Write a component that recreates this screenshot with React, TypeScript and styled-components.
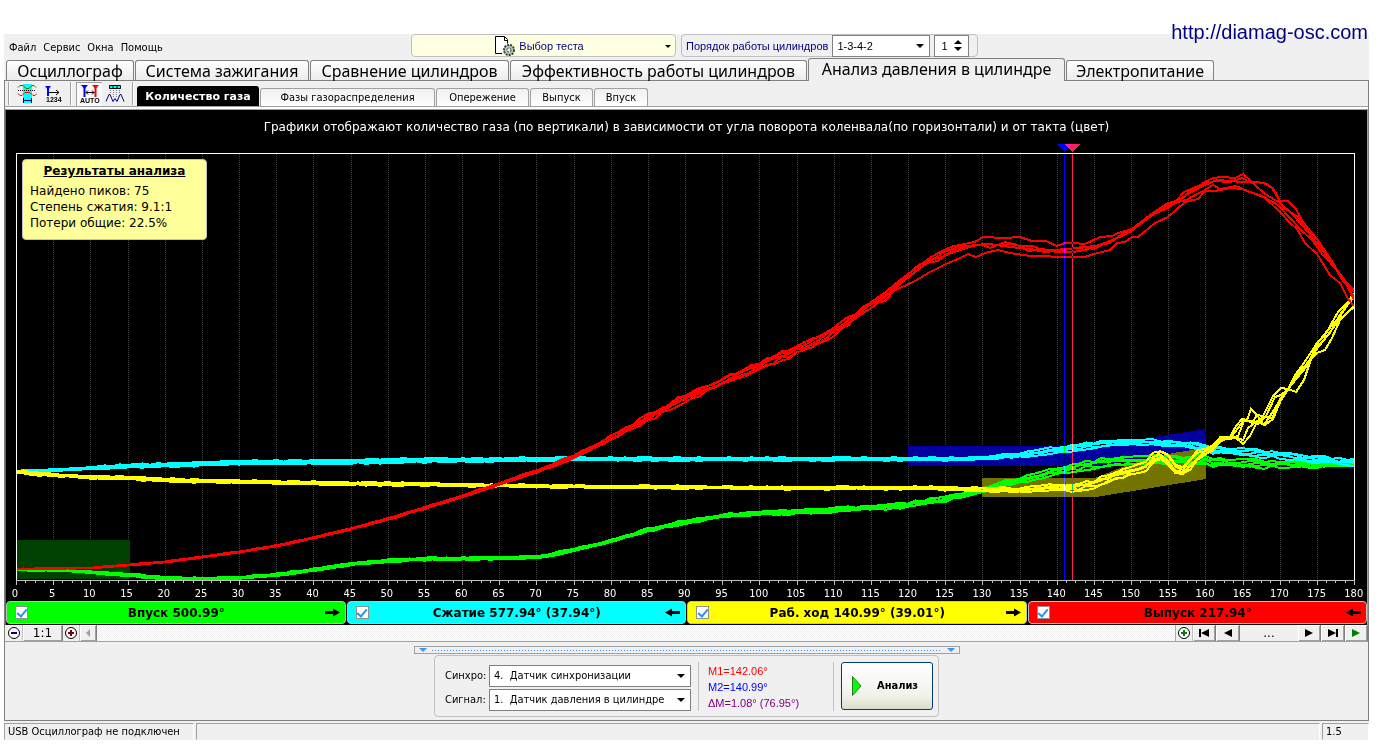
import React from "react";
import styled, { createGlobalStyle, css } from "styled-components";

const ui = `"DejaVu Sans Condensed", "Liberation Sans", sans-serif`;
const wide = `"DejaVu Sans", sans-serif`;
const plain = `"Liberation Sans", sans-serif`;
const heading = `"Noto Sans", sans-serif`;

const Global = createGlobalStyle`
  * { box-sizing: border-box; }
  body { margin: 0; background: #fff; color: #000; font: 11px/16px ${ui}; }
  button, select, input { font: inherit; color: inherit; margin: 0; padding: 0; border-radius: 0; }
  svg { display: block; flex: none; }
`;

/* ---------- chart data ---------- */

type Point = [number, number];

const X0 = 16;
const X1 = 1354;
const Y0 = 153;
const Y1 = 580;
const DEG = (X1 - X0) / 180;

type Series = { color: string; body: Point[]; spread: Point[]; tails?: Point[][]; tailFrom?: number };

const series: Series[] = [
  {
    color: "#00ff00",
    body: [[16, 570], [55, 570], [90, 572], [128, 575], [165, 578], [202, 579], [239, 578], [276, 575], [313, 570], [350, 564], [388, 561], [425, 559], [500, 558], [522, 558], [545, 556], [574, 550], [611, 541], [648, 530], [685, 522], [722, 516], [759, 513], [797, 512], [834, 510], [871, 508], [908, 505], [945, 499], [982, 490], [1007, 483], [1037, 476], [1057, 471], [1072, 468], [1094, 464], [1125, 461], [1147, 460], [1168, 460], [1205, 461], [1227, 463], [1260, 464], [1317, 465], [1354, 464]],
    spread: [[16, 0.6], [110, 1.5], [400, 1.5], [700, 2], [900, 3], [1050, 3.5], [1100, 5], [1210, 5], [1280, 4], [1354, 2]],
  },
  {
    color: "#00ffff",
    body: [[16, 472], [55, 470], [90, 468], [128, 466], [165, 465], [202, 464], [240, 463], [313, 462], [388, 461], [460, 460], [574, 459], [685, 459], [908, 459], [945, 459], [982, 458], [1007, 456], [1027, 454], [1042, 452], [1064, 449], [1093, 445], [1113, 443], [1147, 442], [1168, 444], [1190, 445], [1205, 449], [1227, 451], [1250, 453], [1280, 455], [1300, 458], [1327, 460], [1354, 462]],
    spread: [[16, 1.5], [240, 2.5], [600, 2.2], [700, 1.8], [980, 1.8], [1060, 3.5], [1160, 3], [1240, 4], [1354, 4]],
  },
  {
    color: "#ffff00",
    body: [[16, 472], [55, 475], [90, 477], [128, 478], [165, 480], [202, 481], [240, 482], [313, 483], [388, 484], [460, 485], [537, 486], [611, 487], [685, 487], [760, 488], [908, 488], [982, 489], [1015, 490], [1057, 487], [1073, 488], [1094, 484], [1113, 477], [1147, 466], [1153, 459], [1162, 454], [1168, 460], [1176, 471], [1184, 471], [1192, 462], [1199, 455], [1205, 453], [1213, 447], [1220, 440]],
    spread: [[16, 2], [500, 1.6], [900, 1.6], [1050, 3], [1110, 5], [1160, 6], [1190, 7], [1205, 4], [1220, 2]],
    tailFrom: 1216,
    tails: [
      [[1220, 438], [1230, 437], [1236, 426], [1242, 419], [1247, 420], [1251, 409], [1257, 415], [1263, 416], [1273, 396], [1281, 388], [1288, 389], [1295, 375], [1304, 363], [1317, 343], [1325, 335], [1338, 312], [1347, 303], [1354, 293]],
      [[1220, 440], [1236, 438], [1243, 444], [1250, 436], [1257, 422], [1265, 425], [1273, 419], [1281, 400], [1288, 389], [1296, 392], [1304, 380], [1311, 359], [1317, 353], [1325, 350], [1332, 338], [1340, 320], [1354, 306]],
      [[1220, 439], [1232, 438], [1238, 436], [1244, 421], [1251, 421], [1258, 424], [1266, 416], [1275, 397], [1281, 395], [1288, 389], [1297, 378], [1307, 366], [1318, 346], [1330, 333], [1341, 313], [1354, 297]],
      [[1220, 442], [1232, 436], [1243, 440], [1248, 428], [1256, 422], [1264, 417], [1272, 418], [1280, 402], [1289, 388], [1298, 374], [1309, 361], [1319, 341], [1328, 330], [1340, 316], [1354, 295]],
      [[1220, 437], [1230, 438], [1239, 427], [1244, 419], [1252, 423], [1257, 415], [1264, 425], [1274, 410], [1282, 396], [1288, 390], [1296, 377], [1304, 370], [1316, 350], [1327, 336], [1340, 319], [1354, 307]],
    ],
  },
  {
    color: "#ff0000",
    body: [[16, 569], [90, 568], [128, 565], [165, 562], [202, 557], [240, 552], [276, 546], [313, 538], [350, 529], [388, 519], [425, 508], [460, 497], [499, 484], [537, 471], [574, 457], [611, 438], [648, 418], [685, 398], [722, 382], [759, 366], [797, 350], [834, 332], [872, 305], [892, 291]],
    spread: [[16, 0.4], [400, 1], [560, 2], [640, 4], [800, 5], [892, 5]],
    tailFrom: 892,
    tails: [
      [[900, 280], [923, 263], [931, 257], [946, 249], [954, 246], [975, 242], [983, 237], [1005, 238], [1020, 237], [1032, 241], [1046, 241], [1057, 246], [1065, 243], [1073, 243], [1085, 244], [1100, 237], [1112, 236], [1118, 233], [1132, 229], [1150, 215], [1168, 203], [1176, 201], [1184, 192], [1198, 186], [1213, 178], [1222, 177], [1235, 178], [1243, 174], [1252, 182], [1265, 183], [1273, 188], [1280, 201], [1288, 201], [1296, 209], [1303, 222], [1317, 239], [1330, 258], [1340, 276], [1354, 290]],
      [[900, 288], [915, 281], [930, 272], [946, 264], [960, 258], [968, 254], [976, 257], [985, 253], [998, 250], [1010, 253], [1030, 256], [1045, 256], [1057, 257], [1085, 257], [1094, 254], [1110, 250], [1117, 243], [1125, 242], [1132, 237], [1138, 237], [1155, 223], [1168, 217], [1185, 202], [1198, 199], [1205, 191], [1215, 191], [1230, 188], [1242, 189], [1255, 194], [1265, 198], [1280, 212], [1290, 223], [1297, 229], [1305, 243], [1317, 254], [1330, 275], [1340, 283], [1348, 299], [1354, 306]],
      [[900, 283], [923, 266], [932, 260], [946, 251], [962, 246], [983, 245], [990, 248], [1005, 242], [1020, 246], [1033, 246], [1045, 251], [1065, 249], [1080, 248], [1094, 246], [1110, 243], [1122, 234], [1132, 230], [1154, 214], [1168, 208], [1186, 195], [1205, 185], [1214, 181], [1230, 182], [1242, 178], [1254, 184], [1265, 194], [1280, 203], [1290, 212], [1302, 225], [1317, 243], [1332, 261], [1343, 281], [1354, 292]],
      [[900, 281], [920, 264], [938, 261], [946, 255], [960, 250], [975, 245], [990, 244], [1010, 247], [1030, 249], [1045, 252], [1064, 250], [1082, 247], [1094, 249], [1112, 240], [1122, 235], [1132, 229], [1144, 221], [1158, 211], [1170, 204], [1186, 200], [1203, 191], [1213, 185], [1220, 189], [1236, 186], [1250, 192], [1262, 196], [1278, 205], [1290, 218], [1300, 229], [1312, 240], [1323, 255], [1337, 270], [1354, 297]],
      [[900, 284], [914, 273], [930, 260], [942, 257], [958, 248], [972, 246], [984, 244], [1000, 245], [1015, 244], [1028, 251], [1042, 249], [1057, 252], [1073, 252], [1085, 250], [1102, 244], [1115, 239], [1130, 232], [1148, 218], [1164, 207], [1178, 202], [1194, 188], [1205, 184], [1218, 180], [1242, 182], [1258, 182], [1266, 184], [1272, 188], [1284, 208], [1298, 217], [1310, 234], [1320, 247], [1334, 266], [1344, 279], [1354, 300]],
    ],
  },
];

const interpolate = (points: Point[], x: number) => {
  for (let i = 1; i < points.length; i++) {
    const [ax, ay] = points[i - 1];
    const [bx, by] = points[i];
    if (x <= bx) return ay + ((by - ay) * (x - ax)) / (bx - ax);
  }
  return points[points.length - 1][1];
};

const noise = (n: number) => {
  const v = Math.sin(n * 127.1 + 311.7) * 43758.5453;
  return (v - Math.floor(v)) * 2 - 1;
};

const tracePoints = (s: Series, trace: number) => {
  const out: Point[] = [];
  const end = s.tailFrom ?? X1;
  for (let d = 0; d <= 180; d++) {
    const x = X0 + d * DEG;
    if (x > end + 1) break;
    const wander = (trace - 2) * 0.35 + noise(trace * 57 + d) * 0.4;
    out.push([x, Math.min(interpolate(s.body, x) + wander * interpolate(s.spread, x), Y1 - 1)]);
  }
  if (s.tails) out.push(...s.tails[trace]);
  return out.map(([x, y]) => `${x.toFixed(1)},${y.toFixed(1)}`).join(" ");
};

const marks = Array.from({ length: 37 }, (_, i) => i * 5);
const minorMarks = Array.from({ length: 145 }, (_, i) => i);

/* ---------- window frame ---------- */

const Page = styled.div`
  position: relative;
  display: flex;
  min-height: 100vh;
  padding: 34px 13px 4px 4px;
`;

const Site = styled.a`
  position: absolute;
  top: 20px;
  right: 14px;
  font: 20px/24px ${plain};
  color: #000080;
  text-decoration: none;
`;

const Window = styled.div`
  flex: 1;
  min-width: 0;
  display: flex;
  flex-direction: column;
  background: #f0f0f0;
`;

const Header = styled.header`
  display: flex;
  height: 24px;
`;

const Menu = styled.nav`
  display: flex;
  align-items: center;
  gap: 7px;
  width: 407px;
  padding: 3px 0 0 5px;
`;

const MenuItem = styled.button`
  border: 0;
  background: none;
`;

const TestPicker = styled.button`
  position: relative;
  display: flex;
  align-items: center;
  justify-content: center;
  gap: 4px;
  width: 265px;
  height: 23px;
  padding-right: 8px;
  border: 1px solid #c0c0c0;
  border-radius: 4px;
  background: #ffffe1;
  color: #000080;
  font: 11px/16px ${plain};
`;

const PickerArrow = styled.svg`
  position: absolute;
  right: 4px;
  top: 10px;
`;

const OrderGroup = styled.div`
  display: flex;
  align-items: center;
  gap: 4px;
  width: 297px;
  height: 23px;
  margin-left: 5px;
  padding-left: 4px;
  border: 1px solid #c0c0c0;
  border-radius: 4px;
  color: #000080;
  font: 11px/16px ${plain};
`;

const SelectBox = styled.span<{ $grow?: boolean }>`
  position: relative;
  display: flex;
  width: ${(p) => (p.$grow ? "202px" : "98px")};
  height: 22px;
  svg { position: absolute; right: 6px; top: 9px; pointer-events: none; }
`;

const Select = styled.select`
  flex: 1;
  appearance: none;
  padding: 0 16px 0 4px;
  border: 1px solid #808080;
  background: #fff;
  color: #000;
  outline: 0;
`;

const Spinner = styled.span`
  display: flex;
  width: 35px;
  height: 22px;
  border: 1px solid #808080;
  background: #fff;
`;

const SpinInput = styled.input`
  width: 14px;
  min-width: 0;
  flex: 1;
  padding-left: 6px;
  border: 0;
  outline: 0;
  background: none;
  color: #000;
`;

const SpinButtons = styled.span`
  display: flex;
  flex-direction: column;
  justify-content: center;
  gap: 3px;
  width: 14px;
`;

const SpinButton = styled.button`
  border: 0;
  background: none;
`;

/* ---------- tabs ---------- */

const MainTabs = styled.div`
  display: flex;
  align-items: flex-end;
  gap: 1px;
  height: 23px;
  padding-left: 2px;
  border-bottom: 1px solid #808080;
`;

const MainTab = styled.button<{ $active?: boolean; $width: number }>`
  width: ${(p) => p.$width}px;
  height: 20px;
  border: 1px solid #808080;
  border-bottom: 0;
  border-radius: 3px 3px 0 0;
  background: linear-gradient(#fff, #ececec);
  font: 16px/18px ${heading};
  white-space: nowrap;
  ${(p) => p.$active && css`
    height: 23px;
    margin-bottom: -1px;
    padding-bottom: 2px;
    background: #f0f0f0;
  `}
`;

const Work = styled.div`
  flex: 1;
  display: flex;
  flex-direction: column;
  border: solid #808080;
  border-width: 0 1px 1px 1px;
`;

const ToolRow = styled.div`
  display: flex;
  align-items: flex-end;
  height: 26px;
  padding-left: 3px;
  border-bottom: 1px solid #a0a0a0;
`;

const Tools = styled.div`
  display: flex;
  align-items: center;
  height: 25px;
`;

const Divider = styled.span`
  width: 2px;
  height: 23px;
  border-left: 1px solid #a0a0a0;
  border-right: 1px solid #fff;
`;

const ToolButton = styled.button<{ $pressed?: boolean }>`
  display: flex;
  align-items: center;
  justify-content: center;
  width: 26px;
  height: 24px;
  border: 0;
  background: ${(p) => (p.$pressed ? "#fafafa" : "none")};
  ${(p) => p.$pressed && css`border-left: 1px solid #a0a0a0; border-top: 1px solid #a0a0a0;`}
`;

const ToolGap = styled.span`
  width: 4px;
`;

const SubTabs = styled.div`
  display: flex;
  align-items: flex-end;
  gap: 1px;
  margin-left: 3px;
`;

const SubTab = styled.button<{ $active?: boolean; $width: number }>`
  width: ${(p) => p.$width}px;
  height: 18px;
  border: 1px solid #a0a0a0;
  border-bottom: 0;
  border-radius: 3px 3px 0 0;
  background: linear-gradient(#f0f0f0, #fff);
  font: 11px/16px ${ui};
  white-space: nowrap;
  ${(p) => p.$active && css`
    height: 20px;
    border-color: #000;
    background: #000;
    color: #fff;
    font: bold 11px/16px ${wide};
  `}
`;

/* ---------- chart ---------- */

const ChartFrame = styled.div`
  flex: 1;
  display: flex;
  padding-top: 2px;
  background: #fff;
`;

const ChartPanel = styled.section`
  flex: 1;
  min-width: 0;
  display: flex;
  flex-direction: column;
  border-top: 1px solid #a0a0a0;
  border-left: 1px solid #606060;
  border-right: 1px solid #a0a0a0;
  background: #000;
  color: #fff;
`;

const ChartTitle = styled.h1`
  margin: 9px 0 18px;
  font: 12px/16px ${wide};
  text-align: center;
`;

const Plot = styled.div`
  position: relative;
  flex: 1;
  display: flex;
  min-height: 300px;
  margin: 0 12px 0 10px;
`;

const PlotDrawing = styled.svg`
  flex: 1;
  width: 100%;
  height: auto;
  overflow: visible;
`;

const Results = styled.aside`
  position: absolute;
  left: 6px;
  top: 6px;
  width: 185px;
  height: 81px;
  padding: 3px 7px;
  border: 1px solid #c0c0c0;
  border-radius: 4px;
  background: #ffff99;
  color: #000;
  font: 12px/16px ${wide};
`;

const ResultsTitle = styled.h2`
  margin: 0 0 4px;
  font: bold 12px/16px ${wide};
  text-align: center;
  text-decoration: underline;
`;

const ResultLine = styled.p`
  margin: 0;
`;

const Ticks = styled.svg`
  width: calc(100% - 22px);
  height: 4px;
  margin-left: 10px;
`;

const Scale = styled.div`
  display: flex;
  justify-content: space-between;
  height: 16px;
  margin: 0 13px 0 9px;
  font: 11px/17px ${ui};
`;

const ScaleMark = styled.span`
  display: flex;
  justify-content: center;
  width: 0;
`;

const Phases = styled.div`
  display: flex;
  gap: 1px;
  padding-bottom: 1px;
`;

const Phase = styled.label<{ $color: string }>`
  flex: 1;
  display: flex;
  align-items: center;
  height: 23px;
  padding: 0 5px 0 8px;
  border: 1px solid #c0c0c0;
  border-radius: 4px;
  background: ${(p) => p.$color};
  color: #000;
  font: bold 12px/16px ${wide};
`;

const PhaseCheck = styled.input`
  appearance: none;
  display: flex;
  justify-content: center;
  width: 13px;
  height: 13px;
  border: 1px solid #909090;
  background: #fff;
  &:checked::after {
    content: "";
    width: 4px;
    height: 8px;
    border: solid #3090f0;
    border-width: 0 2px 2px 0;
    transform: rotate(40deg);
  }
`;

const PhaseText = styled.span`
  flex: 1;
  text-align: center;
`;

/* ---------- scroll row ---------- */

const ScrollRow = styled.div`
  display: flex;
  height: 17px;
  border-bottom: 1px solid #a0a0a0;
`;

const Cell = styled.button<{ $size: number; $flat?: boolean }>`
  display: flex;
  align-items: center;
  justify-content: center;
  width: ${(p) => p.$size}px;
  border: 0;
  border-right: ${(p) => (p.$flat ? "1px solid #c0c0c0" : "1px solid #808080")};
  box-shadow: ${(p) => (p.$flat ? "none" : "inset 1px 1px #fff, inset -1px -1px #a0a0a0")};
  background: #f0f0f0;
  font: 12px/16px ${wide};
`;

const Track = styled.div`
  flex: 1;
  border-right: 1px solid #a0b0c0;
  background: repeating-conic-gradient(#fff 0 25%, #f0f0f0 0 50%) 0 0 / 2px 2px;
`;

const Position = styled.span`
  width: 58px;
  text-align: center;
  font: 12px/16px ${wide};
`;

/* ---------- bottom controls ---------- */

const Bottom = styled.section`
  display: flex;
  flex-direction: column;
  align-items: center;
  padding: 4px 0 3px;
`;

const Splitter = styled.div`
  display: flex;
  align-items: center;
  justify-content: space-between;
  width: 546px;
  height: 8px;
  margin-bottom: 1px;
  padding: 0 4px;
  border: 1px solid #a0a0a0;
`;

const Dots = styled.span`
  flex: 1;
  height: 1px;
  margin: 0 5px;
  background: repeating-linear-gradient(90deg, #3399ff 0 1px, transparent 1px 3px);
`;

const Controls = styled.div`
  display: flex;
  align-items: center;
  width: 505px;
  height: 62px;
  padding: 0 5px 0 10px;
  border: 1px solid #c0c0c0;
  border-radius: 4px;
`;

const Sources = styled.div`
  display: grid;
  grid-template-columns: 44px 202px;
  row-gap: 2px;
  align-items: center;
  padding-top: 4px;
`;

const Rule = styled.span`
  width: 1px;
  height: 49px;
  margin: 0 7px;
  background: #c0c0c0;
`;

const Readings = styled.div`
  flex: 1;
  padding: 2px 0 0 2px;
  font: 11px/16px ${plain};
`;

const Reading = styled.p<{ $color: string }>`
  margin: 0;
  color: ${(p) => p.$color};
`;

const Analyse = styled.button`
  display: flex;
  align-items: center;
  gap: 15px;
  width: 92px;
  height: 48px;
  padding-left: 10px;
  border: 1px solid #003c74;
  border-radius: 3px;
  background: linear-gradient(#fff, #f2f2ec 70%, #dcdccc);
  font: bold 11px/16px ${ui};
`;

const Status = styled.footer`
  display: flex;
  gap: 2px;
  height: 19px;
  padding-top: 2px;
`;

const StatusPart = styled.span<{ $size?: number }>`
  flex: ${(p) => (p.$size ? `0 0 ${p.$size}px` : "1")};
  padding-left: 3px;
  border: 1px solid;
  border-color: #a0a0a0 #fff #f0f0f0 #a0a0a0;
`;

/* ---------- small drawings ---------- */

const Down = ({ fill = "#000" }: { fill?: string }) => (
  <svg width="8" height="4" viewBox="0 0 8 4"><path d="M0 0h8L4 4z" fill={fill} /></svg>
);

const Up = () => (
  <svg width="8" height="4" viewBox="0 0 8 4"><path d="M0 4h8L4 0z" fill="#000" /></svg>
);

const PhaseArrow = ({ back }: { back?: boolean }) => (
  <svg width="15" height="9" viewBox="0 0 15 9">
    {back ? <path d="M15 3v3H7v2.500L0 4.500 7 .5V3z" /> : <path d="M0 3v3h8v2.500l7-4-7-4V3z" />}
  </svg>
);

const Round = ({ color, plus }: { color: string; plus?: boolean }) => (
  <svg width="14" height="14" viewBox="0 0 14 14">
    <circle cx="7" cy="7" r="5.5" fill="#fff" stroke="#000" />
    <path d={plus ? "M4 7h6M7 4v6" : "M4 7h6"} stroke={color} strokeWidth="2" />
  </svg>
);

const Seek = ({ d, fill = "#000" }: { d: string; fill?: string }) => (
  <svg width="12" height="10" viewBox="0 0 12 10"><path d={d} fill={fill} /></svg>
);

const TestIcon = () => (
  <svg width="20" height="20" viewBox="0 0 20 20">
    <path d="M.5 .5h8l4 4v13H.5z" fill="#fff" />
    <path d="M7 17.500H.5V.5h9l3 3v4" fill="none" stroke="#000" />
    <path d="M9.500 .5v4h3" fill="none" stroke="#000" />
    <circle cx="14" cy="14" r="5" fill="#a8c0a8" stroke="#304030" strokeWidth="2" strokeDasharray="2 1" />
    <circle cx="14" cy="14" r="4" fill="#b0c4b0" />
    <circle cx="14" cy="14" r="2" fill="#f0f4f0" stroke="#304030" strokeDasharray="2 1" />
  </svg>
);

const PhasesIcon = () => (
  <svg width="20" height="19" viewBox="0 0 20 19">
    <path d="M6 0h9v19H6z" fill="#00ffff" />
    <path d="M1 3.500l2-2h3l3 3h3l3-3h2l2 2" fill="none" stroke="#008000" />
    <path d="M1 6.500h18" stroke="#000" strokeDasharray="1 1" />
    <path d="M1 9.500l2 2h2l3-3h5l3 3h2l2-2" fill="none" stroke="#ff0000" />
    <path d="M6 16.500h9M6.500 14v5M14.500 14v5" stroke="#000080" />
  </svg>
);

const NumbersIcon = () => (
  <svg width="18" height="18" viewBox="0 0 18 18">
    <path d="M1 1h6L4 5z" fill="#0000ff" />
    <path d="M4 2v9" stroke="#0000ff" strokeWidth="2" />
    <path d="M5 7.500h10M12 5l3 2.500-3 2.500" fill="none" stroke="#000" />
    <text x="2" y="17" fontSize="7" fontWeight="bold" fontFamily="Liberation Sans, sans-serif">1234</text>
  </svg>
);

const AutoIcon = () => (
  <svg width="20" height="20" viewBox="0 0 20 20">
    <path d="M1 1h7L4.500 5z" fill="#0000ff" />
    <path d="M4.500 2v11" stroke="#0000ff" strokeWidth="2" />
    <path d="M12 1h7l-3.500 4z" fill="#ff0000" />
    <path d="M15.500 2v11" stroke="#ff0000" strokeWidth="2" />
    <path d="M6 8.500h8M8 6.500l-2 2 2 2M12 6.500l2 2-2 2" fill="none" stroke="#000" />
    <text x="0" y="19" fontSize="7" fontWeight="bold" fontFamily="Liberation Sans, sans-serif">AUTO</text>
  </svg>
);

const WaveIcon = () => (
  <svg width="20" height="19" viewBox="0 0 20 19">
    <path d="M4.500 1.500h11v3h-11z" fill="#00ffff" stroke="#000" />
    <path d="M8 1v4M12 1v4" stroke="#000" />
    <path d="M5.500 6v3M8.500 6v8M11.500 6v8M14.500 6v3" stroke="#808080" strokeDasharray="1 1" />
    <path d="M1 17.500l3-7h1l3 7 2-3 2 3 3-7h1l3 7" fill="none" stroke="#000080" />
  </svg>
);

const PlayGreen = () => (
  <svg width="10" height="20" viewBox="0 0 10 20">
    <path d="M.5 .5L9 10 .5 19.500z" fill="#00ff00" stroke="#208020" />
  </svg>
);

/* ---------- content ---------- */

const mainTabs = [
  { text: "Осциллограф", width: 128 },
  { text: "Система зажигания", width: 174 },
  { text: "Сравнение цилиндров", width: 199 },
  { text: "Эффективность работы цилиндров", width: 297 },
  { text: "Анализ давления в цилиндре", width: 257, active: true },
  { text: "Электропитание", width: 148 },
];

const subTabs = [
  { text: "Количество газа", width: 122, active: true },
  { text: "Фазы газораспределения", width: 175 },
  { text: "Опережение", width: 93 },
  { text: "Выпуск", width: 63 },
  { text: "Впуск", width: 54 },
];

const phases = [
  { text: "Впуск 500.99°", color: "#00ff00" },
  { text: "Сжатие 577.94° (37.94°)", color: "#00ffff", back: true },
  { text: "Раб. ход 140.99° (39.01°)", color: "#ffff00" },
  { text: "Выпуск 217.94°", color: "#ff0000", back: true },
];

const Chart = () => (
  <PlotDrawing viewBox="16 153 1339 428" preserveAspectRatio="none" shapeRendering="crispEdges">
    {marks.slice(1, -1).map((m) => {
      const x = Math.round(X0 + m * DEG) + 0.5;
      return <line key={m} x1={x} x2={x} y1={Y0 + 1} y2={Y1} stroke="#404040" strokeDasharray="1 1" />;
    })}
    <path d="M17 540h113v39H17z" fill="#004000" />
    <path d="M908 446H1096L1206 429V448L1096 466H908z" fill="#0000a0" />
    <path d="M982 478H1095L1130 464 1173 453 1206 448V479L1096 497H982z" fill="#737300" />
    {series.map((s) => (
      <g key={s.color} fill="none" stroke={s.color} strokeWidth="2">
        {[0, 1, 2, 3, 4].map((t) => <polyline key={t} points={tracePoints(s, t)} />)}
      </g>
    ))}
    <path d="M16.500 580V153.500H1354.500V580" fill="none" stroke="#fff" />
    <path d="M16 580.500H1355" stroke="#c0c0c0" />
    <g style={{ mixBlendMode: "difference" }}>
      <path d="M1064.500 154V580" stroke="#0000ff" />
      <path d="M1072.500 154V580" stroke="#ff2050" />
    </g>
    <path d="M1056 144h17l-8.500 8z" fill="#0000ff" />
    <path d="M1064 144h17l-8.500 8z" fill="#ff2060" />
    <path d="M1064 144h9l-4.500 4z" fill="#ff20a0" />
  </PlotDrawing>
);

export default function App() {
  return (
    <Page>
      <Global />
      <Window>
        <Header>
          <Menu>
            {["Файл", "Сервис", "Окна", "Помощь"].map((m) => <MenuItem key={m}>{m}</MenuItem>)}
          </Menu>
          <TestPicker>
            <TestIcon />
            Выбор теста
            <PickerArrow width="6" height="3" viewBox="0 0 6 3"><path d="M0 0h6L3 3z" /></PickerArrow>
          </TestPicker>
          <OrderGroup>
            <label htmlFor="order">Порядок работы цилиндров</label>
            <SelectBox>
              <Select id="order"><option>1-3-4-2</option></Select>
              <Down />
            </SelectBox>
            <Spinner>
              <SpinInput aria-label="Номер цилиндра" defaultValue="1" />
              <SpinButtons>
                <SpinButton aria-label="Больше"><Up /></SpinButton>
                <SpinButton aria-label="Меньше"><Down /></SpinButton>
              </SpinButtons>
            </Spinner>
          </OrderGroup>
        </Header>

        <MainTabs>
          {mainTabs.map((t) => (
            <MainTab key={t.text} $width={t.width} $active={t.active}>{t.text}</MainTab>
          ))}
        </MainTabs>

        <Work>
          <ToolRow>
            <Tools>
              <Divider />
              <ToolGap />
              <ToolButton aria-label="Фазы"><PhasesIcon /></ToolButton>
              <ToolButton aria-label="Нумерация"><NumbersIcon /></ToolButton>
              <ToolGap />
              <Divider />
              <ToolGap />
              <ToolButton $pressed aria-label="Авто"><AutoIcon /></ToolButton>
              <ToolButton aria-label="Сигналы"><WaveIcon /></ToolButton>
              <ToolGap />
              <Divider />
            </Tools>
            <SubTabs>
              {subTabs.map((t) => (
                <SubTab key={t.text} $width={t.width} $active={t.active}>{t.text}</SubTab>
              ))}
            </SubTabs>
          </ToolRow>

          <ChartFrame>
            <ChartPanel>
              <ChartTitle>
                Графики отображают количество газа (по вертикали) в зависимости от угла поворота коленвала(по горизонтали) и от такта (цвет)
              </ChartTitle>
              <Plot>
                <Chart />
                <Results>
                  <ResultsTitle>Результаты анализа</ResultsTitle>
                  <ResultLine>Найдено пиков: 75</ResultLine>
                  <ResultLine>Степень сжатия: 9.1:1</ResultLine>
                  <ResultLine>Потери общие: 22.5%</ResultLine>
                </Results>
              </Plot>
              <Ticks viewBox="0 0 1339 4" preserveAspectRatio="none" shapeRendering="crispEdges">
                {minorMarks.map((m) => (
                  <path key={m} d={`M${Math.round(m * DEG * 1.25) + 0.5} 0v${m % 4 ? 2 : 4}`} stroke="#c0c0c0" />
                ))}
              </Ticks>
              <Scale>
                {marks.map((m) => <ScaleMark key={m}>{m}</ScaleMark>)}
              </Scale>
              <Phases>
                {phases.map((p) => (
                  <Phase key={p.text} $color={p.color}>
                    <PhaseCheck type="checkbox" defaultChecked />
                    <PhaseText>{p.text}</PhaseText>
                    <PhaseArrow back={p.back} />
                  </Phase>
                ))}
              </Phases>
            </ChartPanel>
          </ChartFrame>

          <ScrollRow>
            <Cell $size={18} $flat aria-label="Уменьшить"><Round color="#000080" /></Cell>
            <Cell $size={40}>1:1</Cell>
            <Cell $size={17} $flat aria-label="Увеличить"><Round color="#800000" plus /></Cell>
            <Cell $size={17} aria-label="Влево"><Seek d="M8 1v8L4 5z" fill="#a0a0a0" /></Cell>
            <Track />
            <Cell $size={17} $flat aria-label="Добавить"><Round color="#008000" plus /></Cell>
            <Cell $size={23} aria-label="В начало"><Seek d="M1 1h2v8H1zM11 1v8L3 5z" /></Cell>
            <Cell $size={24} aria-label="Назад"><Seek d="M10 1v8L2 5z" /></Cell>
            <Position>...</Position>
            <Cell $size={23} aria-label="Вперёд"><Seek d="M2 1v8l8-4z" /></Cell>
            <Cell $size={24} aria-label="В конец"><Seek d="M1 1v8l8-4zM9 1h2v8H9z" /></Cell>
            <Cell $size={23} aria-label="Пуск"><Seek d="M2 1v8l8-4z" fill="#008000" /></Cell>
          </ScrollRow>

          <Bottom>
            <Splitter><Down fill="#3399ff" /><Dots /><Down fill="#3399ff" /></Splitter>
            <Controls>
              <Sources>
                <label htmlFor="sync">Синхро:</label>
                <SelectBox $grow>
                  <Select id="sync"><option>{"4.\u00a0 Датчик синхронизации"}</option></Select>
                  <Down />
                </SelectBox>
                <label htmlFor="signal">Сигнал:</label>
                <SelectBox $grow>
                  <Select id="signal"><option>{"1.\u00a0 Датчик давления в цилиндре"}</option></Select>
                  <Down />
                </SelectBox>
              </Sources>
              <Rule />
              <Readings>
                <Reading $color="#ff0000">M1=142.06°</Reading>
                <Reading $color="#0000ff">M2=140.99°</Reading>
                <Reading $color="#800080">ΔM=1.08° (76.95°)</Reading>
              </Readings>
              <Rule />
              <Analyse><PlayGreen />Анализ</Analyse>
            </Controls>
          </Bottom>
        </Work>

        <Status>
          <StatusPart $size={190}>USB Осциллограф не подключен</StatusPart>
          <StatusPart />
          <StatusPart $size={47}>1.5</StatusPart>
        </Status>
      </Window>
      <Site href="http://diamag-osc.com">http://diamag-osc.com</Site>
    </Page>
  );
}
